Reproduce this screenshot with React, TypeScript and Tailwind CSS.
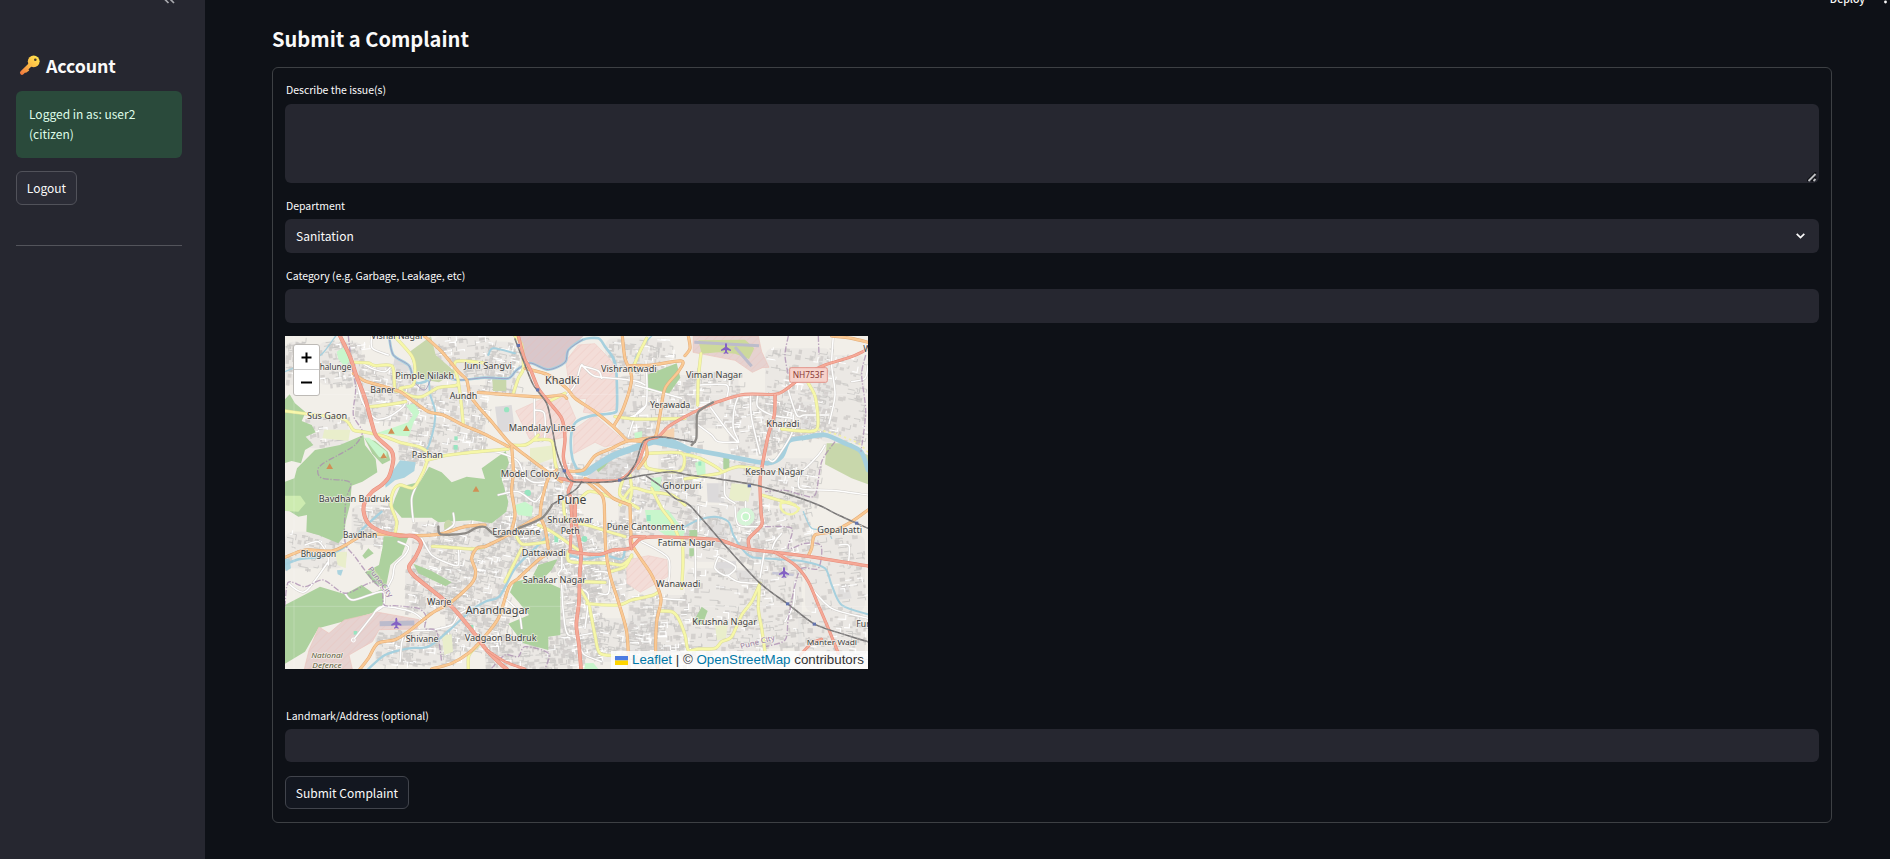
import React from "react";

type Pt = [number, number];

const parse = (s: string): Pt[] =>
  s.trim().split(/\s+/).map((p) => p.split(",").map(Number) as Pt);

/** Catmull-Rom spline through the listed points. */
const curve = (s: string): string => {
  const p = parse(s);
  let d = `M${p[0][0]} ${p[0][1]}`;
  for (let i = 0; i < p.length - 1; i++) {
    const a = p[i - 1] || p[i];
    const b = p[i];
    const c = p[i + 1];
    const e = p[i + 2] || c;
    d += `C${b[0] + (c[0] - a[0]) / 7} ${b[1] + (c[1] - a[1]) / 7} ${c[0] - (e[0] - b[0]) / 7} ${c[1] - (e[1] - b[1]) / 7} ${c[0]} ${c[1]}`;
  }
  return d;
};

const forests = [
  "0,193 14,178 30,205 62,232 50,258 80,270 92,292 62,305 85,330 60,345 48,385 20,378 0,384",
  "0,440 28,430 36,400 90,345 165,330 235,300 240,330 272,372 277,412 232,440 200,452 195,510 182,560 176,605 160,625 100,600 64,590 66,540 40,545 0,520",
  "238,308 270,318 308,350 316,376 292,388 262,356",
  "330,490 345,455 405,440 432,395 470,412 500,442 545,425 600,432 590,400 662,348 672,384 650,432 670,500 664,530 620,565 560,556 460,562 440,548 350,548 322,515",
  "1085,120 1175,85 1186,128 1152,176 1085,166",
  "0,810 105,755 180,778 230,750 265,775 290,762 298,808 260,835 180,858 100,880 60,950 0,986",
  "296,604 345,604 370,606 350,660 316,690 302,760 268,745 240,712 282,690 292,640",
  "232,662 250,640 266,655 240,672",
  "385,686 440,708 500,742 482,754 400,715",
  "675,772 688,740 740,730 760,690 818,672 800,705 770,735 826,760 826,900 790,905 790,945 715,925 670,866 732,840 700,800",
  "1315,367 1333,367 1333,402 1315,402",
  "1213,586 1238,584 1236,610 1213,612",
  "1213,640 1228,640 1226,664 1213,664",
  "930,400 950,374 988,360 962,392 940,412",
  "1225,860 1250,815 1268,828 1252,870",
];
const scrubs = [
  "372,52 438,4 452,60 512,112 462,142 402,132",
  "1625,325 1700,325 1735,355 1749,360 1749,448 1700,430 1620,388",
  "622,132 664,132 664,168 624,168",
];
const lawns = [
  "276,294 330,276 370,262 384,240 362,210 388,206 404,232 386,262 372,304 340,302",
  "238,308 252,308 305,350 304,372 282,366",
  "155,50 182,34 196,76 180,96 160,72",
  "1080,525 1150,525 1200,590 1190,612 1140,600 1085,560",
  "1230,384 1260,370 1262,424 1238,428",
  "1098,430 1130,425 1122,478 1100,480",
  "900,985 925,984 940,1002 898,1002",
  "1048,294 1072,288 1070,316 1050,318",
  "684,512 720,500 744,515 740,545 700,540",
];
const fields = [
  "118,284 196,284 190,318 112,310",
  "735,340 812,330 805,370 760,386 735,372",
  "878,276 900,266 896,300 880,318",
  "150,652 186,650 182,700 158,690",
  "470,900 500,898 504,950 478,960",
  "1290,870 1330,860 1322,910 1296,916",
  "1340,445 1400,450 1390,500 1330,496",
];
const meadow = ["0,482 46,482 62,505 40,530 0,528"];
const military = [
  "842,78 880,30 930,26 972,70 994,100 996,222 930,236 895,232 905,190 880,192 855,165",
  "692,228 770,192 842,180 872,250 838,306 800,316 734,312",
  "866,284 928,240 1022,320 960,336 930,322 866,356",
  "1025,676 1090,662 1146,674 1148,725 1066,772 1026,745",
];
const airfields = [
  "1225,3 1420,3 1430,50 1452,97 1432,98 1402,112 1350,76 1224,52",
  "58,1002 72,945 102,876 132,895 178,855 280,832 402,854 396,882 282,884 262,920 192,960 202,1002",
];
const cantonment = ["704,3 896,3 852,45 846,80 792,106 735,84 712,60"];
const greys = [
  "1265,445 1315,445 1318,504 1268,502",
  "1290,682 1352,678 1356,700 1326,722 1294,706",
  "1350,706 1400,708 1395,745 1360,742",
  "1255,575 1300,550 1330,600 1310,630 1270,610",
  "1660,752 1690,750 1700,790 1660,794",
  "525,190 562,190 562,215 525,215",
  "330,60 380,100 350,120 325,90",
  "1548,245 1575,240 1580,278 1550,280",
  "630,215 680,210 690,290 640,290",
  "930,400 1060,350 1065,390 1010,430 900,435",
];

/* Built-up districts: x, y, width, height, number of streets */
const districts: [number, number, number, number, number][] = [
  [100, 20, 130, 130, 40],
  [210, 90, 190, 170, 80],
  [370, 150, 230, 200, 90],
  [440, 5, 180, 120, 45],
  [600, 20, 90, 150, 40],
  [620, 380, 260, 220, 170],
  [690, 560, 330, 150, 180],
  [380, 560, 330, 150, 120],
  [360, 700, 160, 130, 60],
  [480, 700, 180, 250, 120],
  [820, 700, 120, 270, 110],
  [900, 640, 130, 160, 40],
  [920, 850, 200, 130, 60],
  [1030, 780, 180, 180, 80],
  [960, 10, 200, 100, 40],
  [1000, 120, 240, 210, 90],
  [1120, 340, 130, 100, 40],
  [930, 340, 140, 90, 40],
  [1000, 420, 240, 180, 90],
  [1200, 110, 160, 170, 45],
  [1330, 180, 150, 180, 70],
  [1440, 40, 200, 190, 45],
  [1450, 200, 170, 110, 60],
  [1300, 370, 300, 140, 60],
  [1600, 60, 140, 260, 35],
  [1200, 510, 240, 170, 55],
  [1380, 520, 190, 170, 60],
  [1200, 700, 220, 260, 60],
  [1400, 680, 150, 260, 50],
  [1560, 600, 180, 230, 30],
  [1540, 830, 200, 150, 40],
  [270, 880, 240, 110, 70],
  [200, 510, 130, 120, 45],
  [0, 590, 180, 110, 20],
  [340, 320, 90, 60, 25],
  [0, 20, 60, 130, 25],
  [60, 240, 130, 100, 15],
  [600, 900, 290, 100, 80],
  [1040, 930, 200, 60, 30],
];

const makeRandom = (seed: number) => () => {
  seed = (seed * 1664525 + 1013904223) % 4294967296;
  return seed / 4294967296;
};

const buildStreets = () => {
  const r = makeRandom(41);
  let white = "";
  let grey = "";
  let blocks = "";
  for (const [x, y, w, h, n] of districts) {
    const tilt = (r() - 0.5) * 0.5;
    const c = Math.cos(tilt);
    const s = Math.sin(tilt);
    for (let i = 0; i < n * 1.15; i++) {
      const px = x + r() * w;
      const py = y + r() * h;
      const a = 6 + r() * 22;
      const b = (r() - 0.5) * 38;
      const seg = `M${px.toFixed(1)} ${py.toFixed(1)}l${(a * c).toFixed(1)} ${(a * s).toFixed(1)}l${(-b * s).toFixed(1)} ${(b * c).toFixed(1)}`;
      if (r() < 0.24) white += seg;
      else grey += seg;
      const qx = x + r() * w;
      const qy = y + r() * h;
      const bw = 5 + r() * 12;
      const bh = 5 + r() * 12;
      blocks += `M${qx.toFixed(1)} ${qy.toFixed(1)}l${(bw * c).toFixed(1)} ${(bw * s).toFixed(1)}l${(-bh * s).toFixed(1)} ${(bh * c).toFixed(1)}l${(-bw * c).toFixed(1)} ${(-bw * s).toFixed(1)}z`;
    }
  }
  return { white, grey, blocks };
};
const streets = buildStreets();

const rivers: [string, number][] = [
  ["0,110 60,85 110,58 152,3", 4],
  ["312,3 325,60 372,92 388,140 420,140 450,120 520,135 600,128 670,130 695,105 735,84 790,104 840,82 850,45 893,14 940,10 960,35 985,70 994,110 996,215 985,234 920,242 872,262 858,305 862,370 880,410", 8],
  ["880,410 905,412 935,392 985,362 1050,338 1110,318 1160,322 1210,345", 20],
  ["1110,322 1200,340 1300,358 1400,378 1452,384 1490,364 1512,318 1560,308 1620,300 1680,325 1728,350 1749,405", 14],
  ["432,140 436,180 450,225 448,270 432,330 420,350", 6],
  ["610,60 625,40 690,55", 6],
  ["0,688 45,672 110,665 180,635 240,575 290,530", 7],
  ["250,1002 300,960 370,940 430,935 490,888 560,825 600,800 645,782 690,700 750,640 790,600", 7],
  ["850,660 900,672 960,662 1010,672 1020,640", 7],
  ["1200,575 1240,555 1290,545 1330,560 1345,600 1370,640 1400,666 1470,672 1560,680 1620,700 1640,750 1670,810 1749,838", 6],
  ["1050,70 1075,30 1100,3", 4],
  ["1555,530 1580,580 1625,585 1640,610", 4],
];
const ponds = ["300,445 325,405 345,376 392,382 388,408 358,428 330,436 302,458", "0,670 14,672 18,700 4,708 0,700", "156,706 174,704 168,722 158,718"];

const whiteRoads = [
  "600,350 640,352 700,380 720,440",
  "385,560 380,490 400,440",
  "216,140 232,200 270,250 310,246 355,215 362,196",
  "225,80 260,100 300,110 322,90",
  "260,3 262,40 310,60",
  "130,690 128,660 100,620 60,630",
  "10,745 60,770 130,680",
  "180,775 205,795 290,770 296,810 270,830",
  "205,915 260,845 290,815 380,830 420,860",
  "340,620 370,635 360,660 330,690 322,730 300,770",
  "505,535 505,570 460,600",
  "410,610 440,660 490,685 520,690 520,640",
  "555,820 520,840 500,870 440,885 360,895 345,980",
  "846,180 870,150 888,92 900,100 930,124 1010,132 1060,140 1080,150",
  "888,92 940,108 950,130",
  "1083,75 1083,210 1030,250",
  "1050,150 1120,170 1190,190",
  "748,192 752,305 778,310 778,235 750,225",
  "1030,305 1052,240 1083,212",
  "1362,178 1348,220 1345,280 1362,322 1330,290 1270,208",
  "1396,182 1400,250 1425,356",
  "1418,182 1418,215 1460,240 1520,250",
  "1450,372 1470,375 1520,296 1525,240",
  "1505,150 1535,240 1560,240 1632,240",
  "1645,3 1640,90 1650,180 1632,266",
  "1749,90 1740,130 1700,140",
  "1320,412 1320,480 1350,505",
  "1470,405 1545,410 1600,360 1620,330",
  "1545,410 1545,460 1640,466 1749,480",
  "1240,270 1280,300 1300,320 1360,322",
  "1240,150 1325,150 1325,190",
  "1230,620 1230,740 1205,750",
  "1440,640 1425,728",
  "1300,665 1352,695 1325,722 1290,700 1300,665",
  "1325,720 1360,740 1420,745",
  "1530,740 1525,810 1500,860",
  "1580,760 1640,820 1749,850",
  "1490,595 1470,620 1462,640",
  "830,660 830,700 820,720 870,740",
  "830,750 835,830 850,900 920,895",
  "880,760 910,780 900,880",
  "930,710 970,715 970,775 940,775",
  "965,620 970,690",
  "1070,620 1150,670 1150,750",
  "1120,790 1200,795",
  "660,790 700,830 710,880",
  "640,480 700,470 750,500 780,460",
  "690,400 740,440 780,440",
  "880,930 900,960 950,980",
  "1240,515 1240,590",
  "1350,515 1360,570 1420,575",
  "1382,500 1382,575",
  "1662,630 1692,632 1690,690",
];
const yellowRoads = [
  "0,228 60,236 175,252 205,285 232,290 290,302 345,322 400,335 430,355 425,375 480,362 530,355 600,348 670,342",
  "430,365 415,410 385,458 345,450 325,468 318,510 335,560 330,595",
  "205,82 250,84 270,92 322,94 330,165 350,162",
  "330,5 380,62 390,100 384,150 345,160 370,180 410,185 460,158 510,152 520,140 512,80 600,84",
  "520,140 528,200 535,270",
  "248,216 300,210 362,200",
  "690,3 710,30 715,100 700,130 685,175",
  "1085,10 1060,60 1040,110",
  "990,245 1050,252 1110,252 1200,250",
  "790,200 840,175",
  "745,315 800,318 810,380 815,400",
  "675,330 720,330 745,315 760,300",
  "1085,355 1190,355 1185,408 1090,400 1080,370",
  "1005,510 1040,460 1090,470 1160,480 1200,510",
  "1035,420 1040,470 1030,510",
  "1015,430 1005,480 1060,520",
  "1248,55 1240,130 1238,210",
  "1570,145 1592,190 1597,280 1550,288 1490,282",
  "1200,358 1250,372 1310,410 1260,422 1200,432",
  "1310,412 1360,395 1425,402",
  "1430,480 1480,495 1530,510",
  "442,634 480,636 560,642 600,635",
  "695,605 715,628 790,620",
  "710,640 690,680 660,740",
  "760,570 800,590 880,645",
  "850,650 856,680 960,684 970,684 1010,690 1040,665",
  "885,740 960,742",
  "975,710 1020,695 1040,660",
  "888,765 908,800 912,806 1000,810 1040,795 1100,782 1122,770",
  "912,806 920,850 930,900 945,955 1000,962",
  "1122,828 1160,830 1180,850 1200,900 1210,945 1240,942 1290,940 1310,920 1340,905 1370,840 1400,800 1425,745",
  "1424,745 1420,820 1430,880 1440,950",
  "1192,610 1194,680 1190,760",
  "1100,460 1130,520 1160,560 1180,605",
  "550,1002 552,960 580,930",
  "835,500 845,555 905,570 1020,605",
  "870,510 910,470 960,480 1010,500",
];
const orangeRoads = [
  "418,3 470,50 520,110 545,135 555,180 580,215 620,260 670,320 720,360 780,405 830,440",
  "205,115 240,138 300,155 345,170 380,195 430,230 475,240 530,268 600,298 670,335",
  "580,172 680,180 770,186 830,180 845,190",
  "720,100 790,120 845,160 870,190 930,230 985,275 1028,318",
  "1028,318 1085,310 1112,303 1125,240 1140,160 1180,110 1190,78 1100,90 1030,92",
  "1012,3 1020,70 1040,130 1015,220 985,275",
  "845,408 895,405 930,362 980,340 1028,318 1080,320",
  "1080,320 1086,360 1060,400",
  "0,667 60,645 140,648 182,630 240,600 335,598 370,602 460,598 540,575 600,570",
  "225,1002 250,970 278,925 330,914 370,890 440,835 500,800 560,745 572,710 560,670 575,640 600,635",
  "440,1002 500,985 550,955 590,915 640,850 672,755 700,730 760,675 800,650",
  "600,635 650,610 700,580 760,545",
  "680,335 685,410 680,470 690,540 675,600",
  "815,405 790,430 770,500 765,545",
  "765,545 780,580 790,640",
  "958,510 962,640 975,720 1000,800 1025,890 1032,1002",
  "1035,510 1040,620 1060,660 1100,720 1128,790 1115,860 1112,960 1118,1002",
  "1749,525 1700,560 1640,590 1590,600 1580,640 1570,662",
  "1200,62 1215,40 1210,3",
  "1640,3 1700,10 1749,22",
  "900,430 940,450 985,490 1035,510",
  "905,440 950,480 958,510",
];
const redRoads: [string, number][] = [
  ["165,3 195,65 215,125 240,190 262,270 275,305 318,345 325,375 312,425 290,450 262,470 240,500 236,530 250,565 285,588 345,602 385,603 408,625 392,665 372,695 385,720 440,765 500,815 560,885 605,945 650,990 665,1002", 10],
  ["700,3 718,70 735,100 760,160 795,205 830,250 840,310 835,365 845,405 860,430", 8],
  ["825,430 860,440 850,470 865,500 870,510", 8],
  ["870,510 872,560 888,650 884,720 882,800 874,870 882,930 888,1002", 9],
  ["858,510 860,560 855,650", 7],
  ["855,650 890,655 945,658 985,645 1035,640 1065,612 1100,606 1200,608 1300,615 1380,640 1470,652 1570,664 1749,693", 8],
  ["1040,642 1037,608 1080,605", 7],
  ["860,438 900,436 1005,434 1060,380 1085,318 1120,305 1150,275 1200,245 1240,225 1300,200 1380,178 1470,178 1500,165 1560,120 1620,90 1700,65 1749,42", 7],
  ["1470,180 1468,240 1450,300 1432,390 1425,440 1428,530 1430,570 1392,610 1392,635", 8],
  ["1470,652 1530,690 1570,740 1600,810 1630,880 1660,955", 7],
  ["1545,960 1580,925 1610,912", 6],
  ["605,945 660,980 720,1002", 6],
];
const rails = [
  "690,12 720,90 745,150 785,205 800,270 815,350 838,410 868,440 1005,436 1050,388 1076,318 1130,306 1230,322",
  "1005,436 1080,420 1160,410 1210,420 1290,430 1400,448 1500,475 1600,510 1660,540 1749,580",
  "1080,420 1130,455 1170,490 1215,512 1310,620 1420,740 1510,808 1590,868 1690,902 1749,920",
  "800,510 870,465 890,440",
];
const metro = [
  "1220,330 1234,310 1236,240 1250,222 1284,202",
  "460,575 468,598 540,595 570,580 600,576 640,605 700,580 770,550 800,512",
];
const borders = [
  "190,3 200,90 212,160 205,240 232,290 210,330 160,360 115,385 98,405 112,430 195,442 182,500 180,620 210,665 262,735 295,765",
  "0,815 10,742 60,755 115,735 180,775 250,745 290,740 296,808 330,812 400,820 424,845 420,880 455,890 470,980",
  "1510,3 1500,60 1510,120",
  "1600,3 1602,60",
  "1742,60 1730,120 1742,230 1728,350",
  "1650,320 1610,380 1590,480 1545,478 1500,466 1440,470",
  "1440,575 1520,580 1510,640 1560,625 1608,632 1600,700 1550,700 1530,750 1510,850 1500,915 1440,935",
  "620,1000 660,960 700,965 720,935 790,955 780,1002",
];

type Label = [string, number, number, number, number];
/* text, left, baseline, width, size */
const labels: Label[] = [
  ["Vishal Nagar", 258, 13, 158, 25],
  ["halunge", 104, 104, 95, 25],
  ["Pimple Nilakh", 331, 133, 176, 25],
  ["Baner", 256, 173, 74, 25],
  ["Aundh", 494, 193, 83, 25],
  ["Sus Gaon", 66, 252, 120, 25],
  ["Pashan", 380, 370, 94, 25],
  ["Bavdhan Budruk", 101, 500, 214, 25],
  ["Juni Sangvi", 538, 102, 143, 25],
  ["Khadki", 780, 146, 104, 31],
  ["Vishrantwadi", 948, 110, 167, 25],
  ["Yerawada", 1095, 218, 121, 25],
  ["Mandalay Lines", 671, 289, 200, 25],
  ["Model Colony", 647, 427, 176, 25],
  ["Pune", 816, 507, 88, 36],
  ["Ghorpuri", 1132, 462, 117, 25],
  ["Viman Nagar", 1203, 128, 168, 25],
  ["Kharadi", 1444, 275, 99, 25],
  ["Keshav Nagar", 1381, 420, 176, 25],
  ["Bavdhan", 174, 610, 102, 25],
  ["Bhugaon", 47, 667, 106, 25],
  ["Warje", 426, 809, 73, 25],
  ["Shivane", 362, 921, 99, 25],
  ["Anandnagar", 542, 837, 190, 31],
  ["Vadgaon Budruk", 539, 918, 216, 25],
  ["Erandwane", 622, 601, 144, 25],
  ["Shukrawar", 787, 563, 137, 25],
  ["Peth", 827, 598, 57, 25],
  ["Pune Cantonment", 965, 585, 233, 25],
  ["Dattawadi", 710, 662, 132, 25],
  ["Fatima Nagar", 1118, 633, 172, 25],
  ["Sahakar Nagar", 713, 744, 190, 25],
  ["Wanawadi", 1113, 757, 133, 25],
  ["Gopalpatti", 1597, 593, 134, 25],
  ["Krushna Nagar", 1222, 869, 194, 25],
  ["Manter Wadi", 1565, 930, 151, 23],
  ["Fursungi", 1714, 877, 108, 25],
  ["Wagholi", 1735, 52, 100, 28],
];

const Areas = ({ items, fill, stroke }: { items: string[]; fill: string; stroke?: string }) => (
  <>
    {items.map((p, i) => (
      <polygon key={i} points={p} fill={fill} stroke={stroke} strokeWidth={2} />
    ))}
  </>
);

const Roads = ({ items, casing, fill, w }: { items: string[]; casing: string; fill: string; w: number }) => (
  <>
    <path d={items.map(curve).join("")} stroke={casing} strokeWidth={w + 3} />
    <path d={items.map(curve).join("")} stroke={fill} strokeWidth={w} />
  </>
);

const Plane = ({ x, y }: { x: number; y: number }) => (
  <path
    transform={`translate(${x} ${y})`}
    fill="#8461c4"
    d="M0-16C2-16 3-13 3-10V-4L15 4V8L3 5V11L7 14V17L0 15L-7 17V14L-3 11V5L-15 8V4L-3-4V-10C-3-13-2-16 0-16Z"
  />
);

const CityMap = () => (
  <svg className="block h-full w-full" viewBox="0 3 1749 999" preserveAspectRatio="none" fill="none">
    <defs>
      <pattern id="hatch" width="18" height="18" patternUnits="userSpaceOnUse" patternTransform="rotate(45)">
        <path d="M1 0V18" stroke="#e8b8b0" strokeWidth="2" opacity=".45" />
      </pattern>
    </defs>
    <rect y="3" width="1749" height="999" fill="#f2efe9" />
    <Areas items={greys} fill="#dcdadb" />
    <g fill="#e4e2df">
      {districts.map(([x, y, w, h], i) => (
        <rect key={i} x={x} y={y} width={w} height={h} rx="24" opacity=".5" />
      ))}
    </g>
    <path d={streets.blocks} fill="#d0cdca" opacity=".85" />
    <path d={streets.grey} stroke="#c8c6c4" strokeWidth="2.4" />
    <path d={streets.white} stroke="#fff" strokeWidth="3.2" />
    <Areas items={forests} fill="#add19e" />
    <Areas items={scrubs} fill="#c8d7ab" />
    <Areas items={lawns} fill="#c8f6cc" />
    <Areas items={fields} fill="#e9eecb" />
    <Areas items={meadow} fill="#cdebb0" />
    <ellipse cx="485" cy="577" rx="13" ry="20" transform="translate(5 -3)" fill="#c8d7ab" />
    <Areas items={military} fill="#f3ddd8" stroke="#efcfc9" />
    <Areas items={airfields} fill="#e6d2d0" stroke="#ecc4bd" />
    <Areas items={cantonment} fill="#d9c7cb" />
    <Areas items={[...military, ...airfields, ...cantonment]} fill="url(#hatch)" />
    <polygon points="1130,290 1168,278 1168,320 1126,312" fill="#f6d3b0" />
    <polygon points="1240,16 1380,14 1408,40 1392,72 1350,56 1300,52 1250,56" fill="#cdd99c" />
    <path d="M1228 22L1422 32M1350 36L1400 94" stroke="#bcbccb" strokeWidth="9" />
    <path d="M284 866L388 864" stroke="#bbbbcc" strokeWidth="15" />
    <path d="M1462 714L1526 720" stroke="#c6c6d6" strokeWidth="8" />
    <g fill="#98e4c0">
      <rect x="508" y="304" width="10" height="12" />
      <rect x="506" y="330" width="12" height="14" />
      <circle cx="665" cy="224" r="8" />
      <circle cx="728" cy="474" r="10" />
      <circle cx="898" cy="612" r="9" />
      <rect x="808" y="600" width="12" height="22" />
      <rect x="1240" y="380" width="9" height="12" />
      <rect x="206" y="888" width="11" height="11" />
      <rect x="555" y="870" width="10" height="10" />
      <rect x="1085" y="540" width="12" height="18" />
    </g>
    <Areas items={ponds} fill="#aad3df" />
    <g strokeLinecap="round" strokeLinejoin="round">
      {rivers.map(([p, w], i) => (
        <path key={i} d={curve(p)} stroke="#a6d0de" strokeWidth={w} />
      ))}
      <path d={curve("312,3 325,60 372,92 388,140 420,165 450,120 520,135 600,128 670,130 695,105 735,84 790,104 840,82 850,45 893,14")} stroke="#9a8cb8" strokeWidth="3" opacity=".7" />
      <Roads items={whiteRoads} casing="#d2cfcb" fill="#fff" w={4.5} />
      <path d={borders.map(curve).join("")} stroke="#a98bb0" strokeWidth="4" strokeDasharray="18 5 4 5" opacity=".75" strokeLinecap="butt" />
      <Roads items={yellowRoads} casing="#dcdc9c" fill="#f6f7a8" w={7} />
      <Roads items={orangeRoads} casing="#e2ab76" fill="#fac994" w={6.5} />
      {redRoads.map(([p, w], i) => (
        <g key={i}>
          <path d={curve(p)} stroke="#e68c7b" strokeWidth={w + 2} />
          <path d={curve(p)} stroke="#f5a997" strokeWidth={w - 1} />
        </g>
      ))}
      <path d={rails.map(curve).join("")} stroke="#757373" strokeWidth="4.5" />
      <path d={rails.map(curve).join("")} stroke="#b5b3b3" strokeWidth="1.5" strokeDasharray="12 12" strokeLinecap="butt" />
      <path d={metro.map(curve).join("")} stroke="#8d8a86" strokeWidth="7" />
      <path d={curve("1600,284 1660,300 1720,325 1749,352")} stroke="#f2f0a8" strokeWidth="5" strokeDasharray="7 9" strokeLinecap="butt" />
    </g>
    <circle cx="1382" cy="545" r="21" stroke="#d6f5d8" strokeWidth="12" />
    <circle cx="1382" cy="545" r="12" fill="#c8f6cc" stroke="#fff" strokeWidth="4" />
    <path d="M1488 504A26 24 0 1 0 1542 520L1512 500Z" stroke="#f2f4a5" strokeWidth="7" />
    <circle cx="205" cy="915" r="6" fill="#e8dede" stroke="#fff" strokeWidth="3" />
    <path d="M0 178H1749M0 814H1749M27 3V1002" stroke="#fff" strokeWidth="1.5" opacity=".4" />
    <g fill="#6374ae">
      {parse("695,27 753,160 833,403 999,431 1388,448 1503,802 1583,863 1710,560").map(([x, y]) => (
        <rect key={x} x={x} y={y} width="10" height="9" />
      ))}
    </g>
    <g fill="#d08f55">
      {parse("134,394 296,362 319,288 364,280 573,462").map(([x, y]) => (
        <path key={x} d={`M${x} ${y - 9}l10 17h-20z`} />
      ))}
    </g>
    <Plane x={1323} y={40} />
    <Plane x={334} y={864} />
    <Plane x={1497} y={712} />
    <g className="font-['Noto_Sans',sans-serif]" fill="#403f3f" stroke="#f7f4ef" strokeWidth="5" strokeLinejoin="round" strokeOpacity=".75" paintOrder="stroke">
      {labels.map(([t, x, y, w, size]) => (
        <text key={t} x={x} y={y} fontSize={size} textLength={w} lengthAdjust="spacingAndGlyphs">
          {t}
        </text>
      ))}
      <g fill="#60613c" fontStyle="italic" fontSize="23">
        <text x="79" y="968" textLength="94" lengthAdjust="spacingAndGlyphs">National</text>
        <text x="82" y="998" textLength="88" lengthAdjust="spacingAndGlyphs">Defence</text>
      </g>
      <g fill="#9a7fa3" fontSize="22" strokeOpacity=".5">
        <text transform="translate(248 702) rotate(53)" textLength="108" lengthAdjust="spacingAndGlyphs">Pune City</text>
        <text transform="translate(1368 942) rotate(-15)" textLength="106" lengthAdjust="spacingAndGlyphs">Pune City</text>
      </g>
    </g>
    <rect x="1514" y="98" width="113" height="44" rx="5" fill="#f6d2cb" stroke="#e3958b" strokeWidth="3" />
    <text className="font-['Noto_Sans',sans-serif]" x="1523" y="130" fontSize="25" fill="#8a3834" textLength="94" lengthAdjust="spacingAndGlyphs">NH753F</text>
  </svg>
);

const KeyIcon = () => (
  <svg className="mt-px h-[21px] w-[21px] shrink-0" viewBox="0 0 21 21" fill="none">
    <defs>
      <linearGradient id="key" x1="18" y1="2" x2="2" y2="20" gradientUnits="userSpaceOnUse">
        <stop stopColor="#ffdf4d" />
        <stop offset=".5" stopColor="#fbb547" />
        <stop offset="1" stopColor="#f0743d" />
      </linearGradient>
    </defs>
    <path d="M11 10L3 17.800" stroke="url(#key)" strokeWidth="4" strokeLinecap="round" />
    <path d="M6 17L9.500 14.500" stroke="url(#key)" strokeWidth="2.500" />
    <circle cx="14.700" cy="6.300" r="5.900" fill="url(#key)" />
    <circle cx="16.300" cy="4.700" r="1.300" fill="#4a3a2c" />
  </svg>
);

const Field = ({ label, className, labelClass, children }: { label: string; className?: string; labelClass?: string; children: React.ReactNode }) => (
  <div className={`flex flex-col ${className ?? ""}`}>
    <label className={`h-5 pl-px text-[10.5px] leading-5 tracking-[-0.02px] ${labelClass ?? "mb-[3px]"}`}>{label}</label>
    {children}
  </div>
);

export default function App() {
  return (
    <div className="flex h-[859px] w-full overflow-hidden bg-[#0e1117] font-['Noto_Sans_CJK_JP','Noto_Sans_CJK_SC',sans-serif] text-[12px] text-[#fafafa]">
      <aside className="flex w-[205px] shrink-0 flex-col items-start bg-[#262730] px-4">
        <div className="flex h-[53px] w-full justify-end pr-[14px]">
          <svg className="-mt-[7px] h-3 w-3" viewBox="0 0 12 12" fill="none" stroke="#a8a9ae" strokeWidth="1.7">
            <path d="M5.500 1L1 5.500L5.500 10M11 1L6.500 5.500L11 10" />
          </svg>
        </div>
        <h3 className="flex h-[38px] items-start gap-[6px] pl-[3px] pt-px text-[17.8px] font-bold leading-6">
          <KeyIcon />
          <span className="-mt-[1.5px] tracking-[-0.1px]">Account</span>
        </h3>
        <div className="h-[67px] w-[166px] rounded-[6px] bg-[#2a4a3b] px-[13px] pt-[13px] leading-5 text-[#dffde9]">
          Logged in as: user2
          <br />
          (citizen)
        </div>
        <button className="mt-[13px] flex h-[34px] w-[61px] items-center justify-center rounded-[6px] border border-[#51525a] bg-[#2b2c36]">
          Logout
        </button>
        <div className="mt-10 h-px w-[166px] bg-[#53545b]" />
      </aside>

      <main className="flex min-w-0 flex-1 flex-col pl-[67px] pr-[58px]">
        <div className="-mr-[58px] flex h-[14px] items-start justify-end gap-[18px] pr-[2px]">
          <span className="-mt-[9px] text-[10.5px] font-medium leading-4">Deploy</span>
          <svg className="-mt-[11px] h-4 w-[5px]" viewBox="0 0 5 16" fill="#fafafa">
            <circle cx="2.5" cy="3" r="1.4" />
            <circle cx="2.5" cy="8" r="1.4" />
            <circle cx="2.5" cy="13" r="1.4" />
          </svg>
        </div>
        <h2 className="h-[53px] text-[20.1px] font-bold leading-[50px]">Submit a Complaint</h2>

        <form className="flex h-[756px] flex-col rounded-[6px] border border-[#3d4044] px-3 pt-3">
          <Field label="Describe the issue(s)" labelClass="mb-1">
            <div className="flex h-[79px] items-end justify-end rounded-[6px] bg-[#262730] pb-[1px] pr-[2px]">
              <svg className="h-[10px] w-[10px]" viewBox="0 0 10 10" fill="none">
                <path d="M0 9L9 0M4.500 9.500L9 5" stroke="#0c0d12" strokeWidth="1.8" />
                <path d="M1.500 9L8.500 2M6.500 9L8.500 7" stroke="#bfc0c3" strokeWidth="1.8" />
              </svg>
            </div>
          </Field>
          <Field label="Department" className="mt-[13px]">
            <div className="flex h-[34px] items-center justify-between rounded-[6px] bg-[#262730] pl-[11px] pr-[14px]">
              <span>Sanitation</span>
              <svg className="h-[6px] w-[9px]" viewBox="0 0 9 6" fill="none" stroke="#fafafa" strokeWidth="1.7">
                <path d="M.7.8L4.5 4.5L8.3.8" />
              </svg>
            </div>
          </Field>
          <Field label="Category (e.g. Garbage, Leakage, etc)" className="mt-[13px]">
            <div className="h-[34px] rounded-[6px] bg-[#262730]" />
          </Field>

          <div className="relative mt-[13px] h-[333px] w-[583px] overflow-hidden">
            <CityMap />
            <div className="absolute left-[8px] top-[8px] flex w-[27px] flex-col overflow-hidden rounded-[3px] border border-[#bdbab6] bg-white text-black">
              <span className="flex h-[25px] items-center justify-center border-b border-[#ccc]">
                <svg className="h-[11px] w-[11px]" viewBox="0 0 11 11" fill="none" stroke="#000" strokeWidth="2">
                  <path d="M5.500 0.500V10.500M0.500 5.500H10.500" />
                </svg>
              </span>
              <span className="flex h-[25px] items-center justify-center">
                <svg className="h-[11px] w-[11px]" viewBox="0 0 11 11" fill="none" stroke="#000" strokeWidth="2">
                  <path d="M0 5.500H11" />
                </svg>
              </span>
            </div>
            <div className="absolute bottom-0 right-0 flex h-[18px] w-[257px] items-center whitespace-nowrap bg-white/80 pl-1 font-['Liberation_Sans',sans-serif] text-[13.33px] leading-[18px] text-[#333]">
              <svg className="mr-1 h-[9px] w-[13px] shrink-0" viewBox="0 0 13 9">
                <rect width="13" height="4.5" fill="#4c7be1" />
                <rect y="4.5" width="13" height="4.5" fill="#ffd500" />
              </svg>
              <span className="whitespace-pre">
                <a className="text-[#0078a8]">Leaflet</a> | © <a className="text-[#0078a8]">OpenStreetMap</a> contributors
              </span>
            </div>
          </div>

          <Field label="Landmark/Address (optional)" className="mt-[37px]">
            <div className="h-[33px] rounded-[6px] bg-[#262730]" />
          </Field>
          <button type="button" className="mt-[14px] flex h-[33px] w-[124px] items-center justify-center rounded-[6px] border border-[#41444c] bg-[#131720]">
            Submit Complaint
          </button>
        </form>
      </main>
    </div>
  );
}
